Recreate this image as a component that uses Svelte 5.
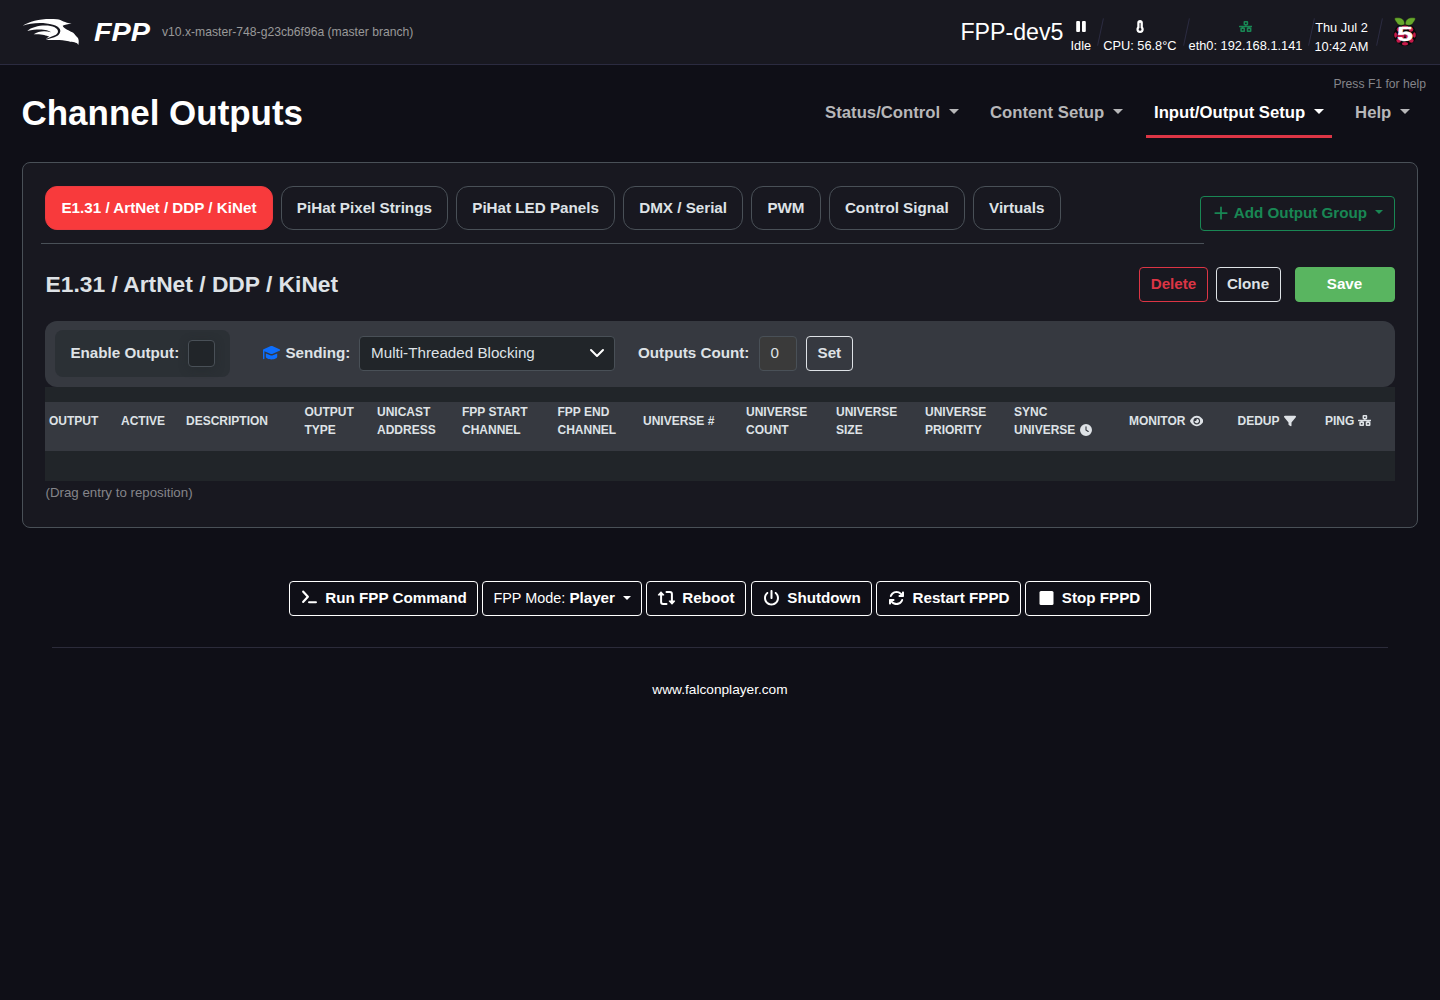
<script>
  // Shared icon shapes, each with its own viewBox
  const icons = {
    pause: {
      box: '0 0 10 12',
      d: 'M1.200 0H3a1 1 0 0 1 1 1V10a1 1 0 0 1-1 1H1.200a1 1 0 0 1-1-1V1a1 1 0 0 1 1-1zM7 0H8.800a1 1 0 0 1 1 1V10a1 1 0 0 1-1 1H7a1 1 0 0 1-1-1V1a1 1 0 0 1 1-1z'
    },
    network: {
      box: '0 0 640 512',
      d: 'M256 0H384a44 44 0 0 1 44 44V156a44 44 0 0 1-44 44H350V224H612a32 32 0 0 1 0 64H498V308H536a44 44 0 0 1 44 44V468a44 44 0 0 1-44 44H402a44 44 0 0 1-44-44V352a44 44 0 0 1 44-44H434V288H206V308H238a44 44 0 0 1 44 44V468a44 44 0 0 1-44 44H104a44 44 0 0 1-44-44V352a44 44 0 0 1 44-44H142V288H28a32 32 0 0 1 0-64H290V200H256a44 44 0 0 1-44-44V44a44 44 0 0 1 44-44zM282 66V134H358V66zM134 378V444H210V378zM430 378V444H506V378z'
    },
    clock: {
      box: '0 0 512 512',
      d: 'M256 0a256 256 0 1 1 0 512A256 256 0 1 1 256 0zM232 120V256c0 8 4 15.500 10.700 20l96 64c11 7.400 25.900 4.400 33.300-6.700s4.400-25.900-6.700-33.300L280 243.200V120c0-13.300-10.700-24-24-24s-24 10.700-24 24z'
    },
    eye: {
      box: '0 0 576 512',
      d: 'M288 32c-80.800 0-145.500 36.800-192.600 80.600C48.600 156 17.300 208 2.500 243.700c-3.300 7.900-3.300 16.700 0 24.600C17.300 304 48.600 356 95.400 399.400C142.500 443.200 207.200 480 288 480s145.500-36.800 192.600-80.600c46.800-43.500 78.100-95.400 93-131.100c3.300-7.900 3.300-16.700 0-24.600c-14.900-35.700-46.200-87.700-93-131.100C433.500 68.800 368.800 32 288 32zM144 256a144 144 0 1 1 288 0 144 144 0 1 1 -288 0zm144-64c0 35.300-28.700 64-64 64c-7.100 0-13.900-1.200-20.300-3.300c-5.500-1.800-11.900 1.600-11.700 7.400c.3 6.900 1.300 13.800 3.200 20.700c13.700 51.200 66.400 81.600 117.600 67.900s81.600-66.400 67.900-117.600c-11.100-41.500-47.800-69.400-88.600-71.100c-5.800-.2-9.200 6.100-7.400 11.700c2.100 6.400 3.300 13.200 3.300 20.300z'
    },
    filter: {
      box: '0 0 512 512',
      d: 'M3.900 54.900C10.500 40.900 24.500 32 40 32H472c15.500 0 29.500 8.900 36.100 22.900s4.600 30.500-5.200 42.500L320 320.900V448c0 12.100-6.800 23.200-17.700 28.600s-23.800 4.300-33.500-3l-64-48c-8.100-6-12.800-15.500-12.800-25.600V320.900L9 97.300C-.7 85.400-2.800 68.800 3.900 54.900z'
    },
    terminal: {
      box: '-32 0 640 560',
      d: 'M34 77a38 38 0 0 1 56-50l170 184a38 38 0 0 1 0 50L90 445a38 38 0 0 1-56-50l146-159zM272 396H514a36 36 0 0 1 0 72H272a36 36 0 0 1 0-72z'
    },
    retweet: {
      box: '0 0 18 14',
      d: 'M3.500.3L6.600 3.600a.6.6 0 0 1-.5 1H4.600V11a1 1 0 0 0 1 1H9a1 1 0 0 1 0 2H5.600a3 3 0 0 1-3-3V4.600H1a.6.6 0 0 1-.5-1zM14.500 13.700L11.400 10.400a.6.6 0 0 1 .5-1H13.400V3a1 1 0 0 0-1-1H9a1 1 0 0 1 0-2H12.400a3 3 0 0 1 3 3V9.400H17a.6.6 0 0 1 .5 1z'
    },
    power: {
      box: '0 0 512 512',
      d: 'M288 32c0-17.700-14.300-32-32-32s-32 14.300-32 32V256c0 17.700 14.300 32 32 32s32-14.300 32-32V32zM143.500 120.600c13.600-11.300 15.400-31.500 4.100-45.100s-31.500-15.400-45.100-4.100C49.700 115.400 16 181.800 16 256c0 132.500 107.500 240 240 240s240-107.500 240-240c0-74.200-33.800-140.600-86.600-184.600c-13.600-11.300-33.800-9.400-45.100 4.100s-9.400 33.800 4.100 45.100c38.900 32.300 63.500 81 63.500 135.400c0 97.200-78.800 176-176 176s-176-78.800-176-176c0-54.400 24.700-103.100 63.500-135.400z'
    },
    rotate: {
      box: '0 0 512 512',
      d: 'M105.100 202.600c7.700-21.800 20.200-42.300 37.800-59.800c62.500-62.500 163.800-62.500 226.300 0L386.300 160H352c-17.700 0-32 14.300-32 32s14.300 32 32 32H463.900c17.700 0 32-14.300 32-32V80c0-17.700-14.300-32-32-32s-32 14.300-32 32v35.200L414.400 97.600c-87.500-87.500-229.300-87.500-316.800 0C73.200 122 55.600 150.700 44.800 181.400c-5.900 16.700 2.900 34.900 19.500 40.800s34.900-2.900 40.800-19.500zM39 289.300c-5 1.500-9.800 4.200-13.700 8.200c-4 4-6.700 8.800-8.100 14c-.8 3-1.200 6-1.200 8.900V432c0 17.700 14.300 32 32 32s32-14.300 32-32V396.900l17.600 17.500c87.500 87.400 229.300 87.400 316.700 0c24.400-24.400 42.100-53.100 52.900-83.700c5.900-16.700-2.900-34.900-19.500-40.800s-34.900 2.900-40.800 19.500c-7.700 21.800-20.200 42.300-37.800 59.800c-62.500 62.500-163.800 62.500-226.300 0L125.600 352H160c17.700 0 32-14.300 32-32s-14.300-32-32-32H48.400c-3.200 0-6.300.5-9.400 1.300z'
    },
    stop: {
      box: '0 0 512 512',
      d: 'M80 32H432a48 48 0 0 1 48 48V432a48 48 0 0 1-48 48H80a48 48 0 0 1-48-48V80a48 48 0 0 1 48-48z'
    },
    plus: {
      box: '0 0 512 512',
      d: 'M224 46a32 32 0 0 1 64 0V224H466a32 32 0 0 1 0 64H288V466a32 32 0 0 1-64 0V288H46a32 32 0 0 1 0-64H224z'
    },
    cap: {
      box: '0 0 576 512',
      d: 'M48 210V456a24 24 0 0 1-48 0V172c0-13 8-24 20-29L262 37q26-10 52 0L556 145c27 12 27 40 0 52L314 300q-26 10-52 0zM96 283L243 345q45 18 90 0L480 283V400c0 50-86 88-192 88S96 450 96 400z'
    },
    thermometer: {
      box: '0 0 320 512',
      d: 'M160 0C98 0 50 46 50 104V270C27 295 16 335 16 368a144 144 0 0 0 288 0c0-33-11-73-34-98V104C270 46 222 0 160 0zM160 110c14 0 22 10 22 24V318c21 10 34 28 34 52a56 56 0 0 1-112 0c0-24 13-42 34-52V134c0-14 8-24 22-24z'
    }
  }

  const menu = [
    { label: 'Status/Control' },
    { label: 'Content Setup' },
    { label: 'Input/Output Setup', active: true },
    { label: 'Help' }
  ]

  const tabs = [
    'E1.31 / ArtNet / DDP / KiNet',
    'PiHat Pixel Strings',
    'PiHat LED Panels',
    'DMX / Serial',
    'PWM',
    'Control Signal',
    'Virtuals'
  ]
  let activeTab = $state(0)

  const columns = [
    { label: 'Output', width: 72 },
    { label: 'Active', width: 65 },
    { label: 'Description', width: 118.5 },
    { label: 'Output Type', width: 72.5 },
    { label: 'Unicast Address', width: 85 },
    { label: 'FPP Start Channel', width: 95.5 },
    { label: 'FPP End Channel', width: 85.5 },
    { label: 'Universe #', width: 103 },
    { label: 'Universe Count', width: 90 },
    { label: 'Universe Size', width: 89 },
    { label: 'Universe Priority', width: 89 },
    { label: 'Sync Universe', width: 115, icon: 'clock' },
    { label: 'Monitor', width: 108.5, icon: 'eye' },
    { label: 'Dedup', width: 87.5, icon: 'filter' },
    { label: 'Ping', width: 74, icon: 'network' }
  ]

  let enabled = $state(false)
  let outputCount = $state('0')
</script>

{#snippet icon(name)}
  <svg class="icon {name}" viewBox={icons[name].box} fill="currentColor" fill-rule="evenodd" aria-hidden="true">
    <path d={icons[name].d} />
  </svg>
{/snippet}

<header class="topbar">
  <svg class="falcon" viewBox="68 54 172 84" fill="#fff" aria-hidden="true">
    <path d="M69 77C92 62 132 54 172 58C187 60 194 69 216 71C204 72 196 73 189 77C192 85 204 89 214 95C225 99 226 105 233 112C238 118 238 126 236 135C231 125 220 128 207 124C185 118 164 121 138 120C151 114 168 113 177 104C188 92 181 80 160 74C130 66 96 68 69 77Z" />
    <path d="M83 93C100 76 146 72 165 82C177 89 178 98 169 104L138 117L149 109C138 107 126 101 102 103C116 93 137 92 154 97C146 89 119 85 83 93Z" />
  </svg>
  <svg class="wordmark" viewBox="0 0 60 24" aria-label="FPP">
    <text x="2" y="20.800" textLength="56" lengthAdjust="spacingAndGlyphs">FPP</text>
  </svg>
  <span class="version">v10.x-master-748-g23cb6f96a (master branch)</span>

  <div class="status">
    <span class="host">FPP-dev5</span>
    <div class="stat idle">{@render icon('pause')}<span>Idle</span></div>
    <i class="slash"></i>
    <div class="stat cpu">{@render icon('thermometer')}<span>CPU: 56.8°C</span></div>
    <i class="slash"></i>
    <div class="stat eth">{@render icon('network')}<span>eth0: 192.168.1.141</span></div>
    <i class="slash"></i>
    <div class="stat clock-text"><span>Thu Jul 2</span><span>10:42 AM</span></div>
    <i class="slash last"></i>
    <svg class="pi" viewBox="0 0 24 30" aria-label="Raspberry Pi 5">
      <path d="M12 7C17 7 21 9 22 13C25 18 23 24 19 26C15 30 9 30 5 26C1 24 -1 18 2 13C3 9 7 7 12 7Z" fill="#080808" />
      <g fill="#c51a4a">
        <ellipse cx="12" cy="10.500" rx="3.500" ry="2" />
        <circle cx="6" cy="12.500" r="2.300" />
        <circle cx="18" cy="12.500" r="2.300" />
        <ellipse cx="2.600" cy="18" rx="1.400" ry="2.700" />
        <ellipse cx="21.400" cy="18" rx="1.400" ry="2.700" />
        <circle cx="8" cy="18.500" r="3.600" />
        <circle cx="16" cy="18.500" r="3.600" />
        <circle cx="5.700" cy="23.500" r="2.300" />
        <circle cx="18.300" cy="23.500" r="2.300" />
        <ellipse cx="12" cy="26.800" rx="3" ry="1.700" />
      </g>
      <g fill="#67a82c" stroke="#182410" stroke-width=".4">
        <path d="M11.700 7.500C7 9.500 4 7 3.500 5C2 4 1.500 2 1.800 1C7 .3 11.500 1 11.700 7.500Z" />
        <path d="M12.300 7.500C17 9.500 20 7 20.500 5C22 4 22.500 2 22.200 1C17 .3 12.500 1 12.300 7.500Z" />
      </g>
      <text x="12" y="24.200" textLength="16" lengthAdjust="spacingAndGlyphs" text-anchor="middle">5</text>
    </svg>
  </div>
</header>

<div class="help-hint">Press F1 for help</div>

<div class="title-row">
  <h1>Channel Outputs</h1>
  <nav>
    {#each menu as item}
      <a href="#top" class:active={item.active}>{item.label}<i class="caret"></i></a>
    {/each}
  </nav>
</div>

<main class="card">
  <div class="tab-row">
    <div class="tabs">
      {#each tabs as tab, i}
        <button class="tab" class:active={activeTab === i} onclick={() => (activeTab = i)}>{tab}</button>
      {/each}
    </div>
    <button class="btn success add">{@render icon('plus')}Add Output Group<i class="caret small"></i></button>
  </div>

  <div class="section-head">
    <h2>E1.31 / ArtNet / DDP / KiNet</h2>
    <button class="btn danger">Delete</button>
    <button class="btn light clone">Clone</button>
    <button class="btn save">Save</button>
  </div>

  <div class="toolbar">
    <label class="enable">Enable Output:<input type="checkbox" bind:checked={enabled} /></label>
    <div class="sending">
      {@render icon('cap')}<b>Sending:</b>
      <div class="select">
        Multi-Threaded Blocking
        <svg viewBox="0 0 16 16" fill="none" stroke="#fff" stroke-width="2" stroke-linecap="round" stroke-linejoin="round"><path d="m2 5 6 6 6-6" /></svg>
      </div>
    </div>
    <b class="count-label">Outputs Count:</b>
    <input class="count" bind:value={outputCount} />
    <button class="btn light set">Set</button>
  </div>

  <table>
    <colgroup>
      {#each columns as col}
        <col style="width: {col.width}px" />
      {/each}
    </colgroup>
    <thead>
      <tr>
        {#each columns as col}
          <th>
            {col.label}
            {#if col.icon}{@render icon(col.icon)}{/if}
          </th>
        {/each}
      </tr>
    </thead>
  </table>
  <small class="hint">(Drag entry to reposition)</small>
</main>

<div class="actions">
  <button class="btn white run">{@render icon('terminal')}Run FPP Command</button>
  <button class="btn white mode"><span>FPP Mode:</span>&nbsp;Player<i class="caret small"></i></button>
  <button class="btn white reboot">{@render icon('retweet')}Reboot</button>
  <button class="btn white shutdown">{@render icon('power')}Shutdown</button>
  <button class="btn white restart">{@render icon('rotate')}Restart FPPD</button>
  <button class="btn white stopd">{@render icon('stop')}Stop FPPD</button>
</div>

<footer>www.falconplayer.com</footer>

<style>
  :global(body) {
    background: #0f0f17;
    color: #dee2e6;
    font-family: "Liberation Sans", Arial, sans-serif;
    font-size: 15.2px;
    line-height: 1.5;
  }

  :global(*) {
    box-sizing: border-box;
  }

  button,
  input {
    font: inherit;
    color: inherit;
  }

  .icon {
    height: 1em;
    flex: none;
  }

  .topbar {
    display: flex;
    align-items: center;
    height: 65px;
    padding: 0 22px;
    background: #181820;
    border-bottom: 1px solid #2b2b40;
  }

  .falcon {
    width: 58px;
    height: 28px;
    flex: none;
  }

  .wordmark {
    width: 60px;
    height: 24px;
    margin-left: 12px;
    overflow: visible;
  }

  .wordmark text {
    font-weight: 700;
    font-style: italic;
    font-size: 25.5px;
    fill: #fff;
  }

  .version {
    margin-left: 10px;
    color: #999;
    font-size: 12.16px;
  }

  .status {
    display: flex;
    margin-left: auto;
    height: 64px;
    color: #fff;
    font-size: 12.8px;
    line-height: 19px;
  }

  .host {
    margin-right: 7px;
    font-size: 23.2px;
    line-height: 64px;
  }

  .stat {
    display: flex;
    flex-direction: column;
    align-items: center;
    padding-top: 20px;
    white-space: nowrap;
  }

  .stat .icon {
    height: 13px;
    margin-bottom: 3px;
  }

  .stat .pause {
    height: 12px;
    margin: 1px 0 3px;
  }

  .stat .network {
    height: 11px;
    margin: 1px 0 4px;
    color: #198754;
  }

  .clock-text {
    padding-top: 18px;
  }

  .slash {
    width: 1px;
    height: 28px;
    margin: 18px 2px 0 9px;
    background: #2b2b40;
    transform: rotate(12deg);
  }

  .slash.last {
    margin: 18px 13.5px 0 10px;
  }

  .pi {
    width: 24px;
    height: 30px;
    margin: 17px 1px 0 0;
  }

  .pi text {
    font-size: 20px;
    font-weight: 700;
    fill: #fff;
    stroke: #fff;
    stroke-width: 0.3px;
  }

  .help-hint {
    height: 22px;
    padding: 10px 14px 0 0;
    text-align: right;
    color: #85858a;
    font-size: 12.16px;
    line-height: 18px;
  }

  .title-row {
    display: flex;
    justify-content: space-between;
    height: 75px;
    padding: 0 22px;
  }

  h1 {
    margin: 5px 0 0 -0.5px;
    color: #fff;
    font-size: 34.96px;
    line-height: 42px;
  }

  nav {
    display: flex;
    gap: 15.2px;
  }

  nav a {
    display: flex;
    align-items: center;
    height: 51px;
    padding: 4px 8px 0;
    border-bottom: 3px solid transparent;
    color: #b7b7b9;
    font-size: 16.72px;
    font-weight: 700;
    text-decoration: none;
  }

  nav a.active {
    color: #fff;
    border-color: #dc3545;
  }

  .caret {
    margin: 0 0 3px 8.7px;
    border: 5px solid transparent;
    border-top-color: currentColor;
    border-bottom: 0;
  }

  .caret.small {
    margin: 0 0 1px 7.6px;
    border-width: 4px 4px 0;
  }

  .card {
    height: 366px;
    margin: 0 22px;
    padding: 23px 22px;
    border: 1px solid #495057;
    border-radius: 8px;
    background: #181820;
  }

  .tab-row {
    display: flex;
    justify-content: space-between;
  }

  .tabs {
    display: flex;
    gap: 8px;
    width: 1163px;
    height: 58px;
    margin: 0 -4px;
    padding-left: 4.3px;
    border-bottom: 1px solid #495057;
  }

  .tab {
    height: 44px;
    padding: 0 15.2px;
    border: 1px solid #495057;
    border-radius: 12px;
    background: none;
    font-weight: 700;
    white-space: nowrap;
  }

  .tab.active {
    border-color: #ea3a40;
    background: #f83a3c;
    color: #fff;
  }

  .btn {
    display: flex;
    align-items: center;
    justify-content: center;
    height: 35px;
    padding: 0;
    border: 1px solid currentColor;
    border-radius: 4px;
    background: none;
    font-weight: 700;
    white-space: nowrap;
  }

  .success {
    color: #198754;
  }

  .add {
    width: 195px;
    margin-top: 10px;
    padding-left: 1.5px;
  }

  .add .icon {
    height: 14px;
    margin: 0 6px 2px 0;
  }

  .add .caret {
    margin-bottom: 4px;
  }

  .section-head {
    display: flex;
    height: 54px;
    margin-top: 23px;
  }

  h2 {
    margin: 0 auto 0 0.5px;
    font-size: 22.8px;
    line-height: 35px;
  }

  .danger {
    width: 69px;
    color: #dc3545;
  }

  .clone {
    width: 65px;
    margin: 0 14px 0 8px;
    padding-right: 1px;
  }

  .save {
    width: 100px;
    padding-right: 1px;
    border-color: #59b560;
    background: #59b560;
    color: #fff;
  }

  .toolbar {
    display: flex;
    align-items: center;
    height: 66px;
    padding: 0 0 2px 10px;
    border-radius: 12px;
    background: #363940;
  }

  .enable {
    display: flex;
    align-items: center;
    gap: 8.7px;
    width: 175px;
    height: 47px;
    padding-left: 15.4px;
    border-radius: 8px;
    background: #2b3035;
    font-weight: 700;
  }

  .enable input {
    appearance: none;
    width: 27px;
    height: 27px;
    margin: 0;
    border: 1px solid #495057;
    border-radius: 4px;
    background: #212529;
    box-shadow: 0 2px 10px rgba(33, 37, 41, 0.4);
  }

  .sending {
    display: flex;
    align-items: center;
    margin-left: 33px;
  }

  .cap {
    margin-right: 5.4px;
    color: #0d6efd;
  }

  .select {
    display: flex;
    align-items: center;
    justify-content: space-between;
    width: 256px;
    height: 35px;
    margin-left: 8.6px;
    padding: 0 9px 0 11px;
    border: 1px solid #495057;
    border-radius: 4px;
    background: #212529;
  }

  .select svg {
    width: 16px;
  }

  .count-label {
    margin-left: 23px;
  }

  .count {
    width: 38px;
    height: 35px;
    margin: 0 9px 0 10px;
    padding: 0 10px 2px;
    border: 1px solid #495057;
    border-radius: 4px;
    background: #3a3a3a;
  }

  .set {
    width: 47px;
    padding-right: 1px;
  }

  table {
    width: 1350px;
    border-top: 15px solid #212529;
    border-bottom: 30px solid #212529;
    border-spacing: 0;
    table-layout: fixed;
  }

  th {
    height: 49px;
    padding: 1px 0 12px 4px;
    background: #363940;
    font-size: 12px;
    line-height: 18px;
    text-align: left;
    text-transform: uppercase;
  }

  th:nth-child(n + 3):nth-child(-n + 12) {
    padding-right: 15px;
  }

  th .icon {
    height: 12px;
    margin-left: 1px;
    vertical-align: -1.5px;
  }

  th .network {
    height: 11px;
    margin-left: 0;
    vertical-align: -1px;
  }

  .hint {
    display: block;
    padding: 1px 0 0 0.5px;
    color: #85858a;
    font-size: 13.3px;
    line-height: 22px;
  }

  .actions {
    display: flex;
    justify-content: center;
    gap: 4px;
    height: 67px;
    margin: 53px 52px 0;
    border-bottom: 1px solid #2b2b3a;
  }

  .white {
    color: #fff;
  }

  .actions .icon {
    width: 19px;
    height: 16px;
    margin: 0 6px 2px 0;
  }

  .actions .retweet {
    height: 14px;
  }

  .run {
    width: 189px;
  }

  .mode {
    width: 160px;
  }

  .mode span {
    font-weight: 400;
    font-size: 14.4px;
  }

  .reboot {
    width: 100px;
    margin-right: 1px;
  }

  .shutdown {
    width: 121px;
  }

  .restart {
    width: 145px;
  }

  .stopd {
    width: 126px;
    padding-left: 1px;
  }

  footer {
    margin-top: 32px;
    color: #fff;
    font-size: 13.68px;
    text-align: center;
  }
</style>
